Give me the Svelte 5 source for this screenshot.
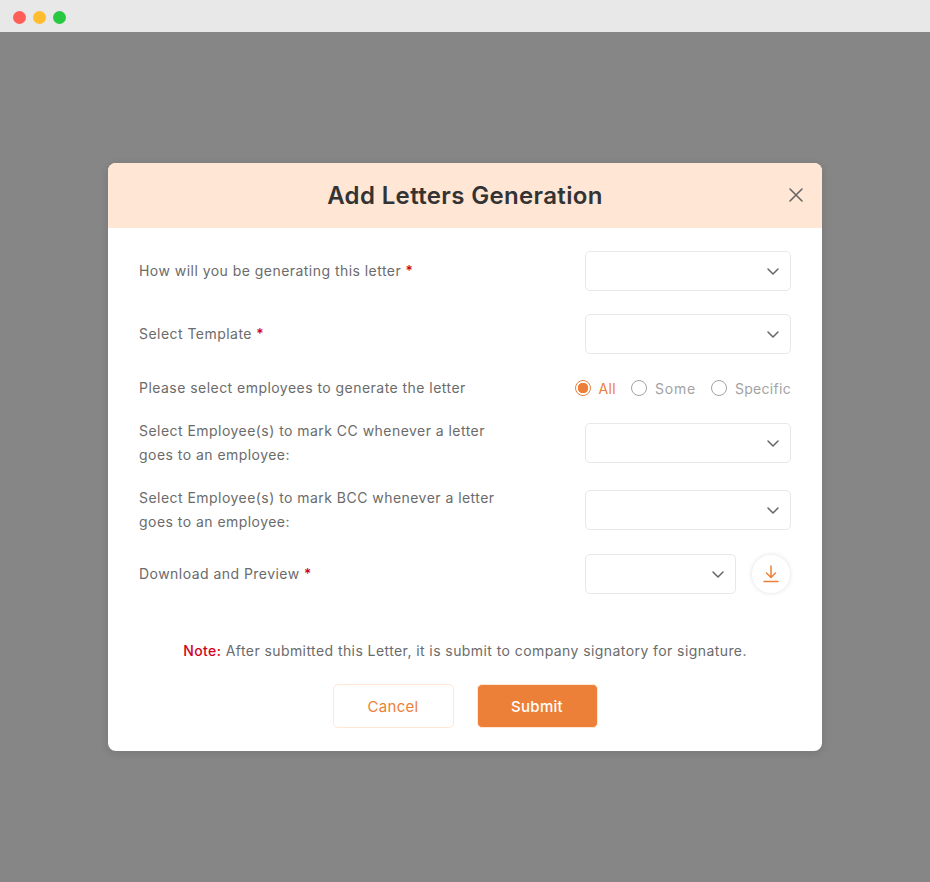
<script lang="ts">
	const radios = [
		{ label: 'All', active: true },
		{ label: 'Some', active: false },
		{ label: 'Specific', active: false }
	];
</script>

{#snippet select()}
	<button type="button" class="select" aria-label="Select">
		<svg width="12" height="7" viewBox="0 0 12 7" fill="none">
			<path d="M1 1l5 5 5-5" stroke="#666" stroke-width="1.5" stroke-linecap="round" stroke-linejoin="round" />
		</svg>
	</button>
{/snippet}

<div class="page">
	<header class="titlebar">
		<span class="dot red"></span>
		<span class="dot yellow"></span>
		<span class="dot green"></span>
	</header>

	<main class="overlay">
		<section class="modal">
			<div class="modal-head">
				<h1>Add Letters Generation</h1>
				<button type="button" class="close" aria-label="Close">
					<svg width="16" height="16" viewBox="0 0 16 16" fill="none">
						<path d="M2 2l12 12M14 2L2 14" stroke="#666" stroke-width="1.6" stroke-linecap="round" />
					</svg>
				</button>
			</div>

			<div class="modal-body">
				<div class="row first">
					<span class="label">How will you be generating this letter <b>*</b></span>
					{@render select()}
				</div>
				<div class="row first">
					<span class="label">Select Template <b>*</b></span>
					{@render select()}
				</div>
				<div class="row radios-row">
					<span class="label">Please select employees to generate the letter</span>
					<div class="radios">
						{#each radios as r}
							<span class="radio" class:active={r.active}>
								<i></i>{r.label}
							</span>
						{/each}
					</div>
				</div>
				<div class="row wrap">
					<span class="label narrow">Select Employee(s) to mark CC whenever a letter goes to an employee:</span>
					{@render select()}
				</div>
				<div class="row wrap">
					<span class="label narrow">Select Employee(s) to mark BCC whenever a letter goes to an employee:</span>
					{@render select()}
				</div>
				<div class="row last">
					<span class="label">Download and Preview <b>*</b></span>
					<div class="download-group">
						{@render select()}
						<button type="button" class="download" aria-label="Download">
							<svg width="16" height="18" viewBox="0 0 16 18" fill="none">
								<path d="M8 1v11M3.5 8L8 12.5 12.5 8M1 16.5h14" stroke="#ed8038" stroke-width="1.5" stroke-linecap="round" stroke-linejoin="round" />
							</svg>
						</button>
					</div>
				</div>

				<p class="note"><strong>Note:</strong> After submitted this Letter, it is submit to company signatory for signature.</p>

				<div class="actions">
					<button type="button" class="btn cancel">Cancel</button>
					<button type="button" class="btn submit">Submit</button>
				</div>
			</div>
		</section>
	</main>
</div>

<style>
	:global(body) {
		margin: 0;
		font-family: Inter, "Noto Sans", sans-serif;
	}

	.page {
		display: flex;
		flex-direction: column;
		height: 882px;
		background: #868686;
	}

	.titlebar {
		display: flex;
		align-items: center;
		gap: 7px;
		box-sizing: border-box;
		height: 32px;
		padding: 2px 14px 0 13px;
		background: #e8e8e8;
		flex: none;
	}

	.dot {
		width: 13px;
		height: 13px;
		border-radius: 50%;
	}
	.red { background: #ff5f57; }
	.yellow { background: #febc2e; }
	.green { background: #28c840; }

	.overlay {
		flex: 1;
		display: flex;
		align-items: center;
		justify-content: center;
	}

	.modal {
		width: 714px;
		background: #fff;
		border-radius: 8px;
		overflow: hidden;
		box-shadow: 0 2px 8px rgba(0, 0, 0, 0.12);
	}

	.modal-head {
		position: relative;
		height: 65px;
		display: flex;
		align-items: center;
		justify-content: center;
		background: #ffe6d5;
	}

	h1 {
		margin: 0;
		font-size: 24px;
		font-weight: 600;
		letter-spacing: 0.35px;
		color: #333;
	}

	.close {
		position: absolute;
		right: 18px;
		top: 24px;
		padding: 0;
		border: 0;
		background: none;
		display: flex;
	}

	.modal-body {
		padding: 23px 31px;
	}

	.row {
		display: flex;
		align-items: center;
		justify-content: space-between;
		margin-bottom: 19px;
	}
	.row.first { margin-bottom: 23px; }
	.row.radios-row { height: 22px; margin-bottom: 20px; }
	.row.wrap { height: 48px; }
	.row.last { height: 42px; margin-bottom: 0; }

	.label {
		font-size: 14px;
		line-height: 24px;
		letter-spacing: 0.46px;
		color: #6b6b6b;
	}
	.label b {
		color: #d0021b;
		font-weight: 500;
	}
	.narrow { width: 365px; }

	.select {
		display: flex;
		align-items: center;
		justify-content: flex-end;
		box-sizing: border-box;
		width: 206px;
		height: 40px;
		padding: 0 11px 0 0;
		border: 1px solid #e8e8e8;
		border-radius: 5px;
		background: #fff;
	}

	.download-group {
		display: flex;
		align-items: center;
		gap: 15px;
	}
	.download-group .select { width: 151px; }

	.download {
		box-sizing: border-box;
		width: 40px;
		height: 40px;
		display: flex;
		align-items: center;
		justify-content: center;
		padding: 0;
		border: 1px solid #f2f2f2;
		border-radius: 50%;
		background: #fff;
		box-shadow: 0 0 4px rgba(0, 0, 0, 0.08);
	}

	.radios {
		display: flex;
		gap: 15px;
	}

	.radio {
		display: flex;
		align-items: center;
		gap: 8px;
		font-size: 14px;
		letter-spacing: 0.3px;
		color: #a3a3a3;
	}
	.radio:nth-child(2) { letter-spacing: 0.8px; }
	.radio i {
		box-sizing: border-box;
		width: 16px;
		height: 16px;
		border: 1.5px solid #a3a3a3;
		border-radius: 50%;
	}
	.radio.active { color: #ed8038; }
	.radio.active i {
		border-color: #ed8038;
		background: radial-gradient(circle, #ed8038 0 5px, #fff 5.5px);
	}

	.note {
		margin: 44px 0 0;
		text-align: center;
		font-size: 14px;
		line-height: 24px;
		letter-spacing: 0.42px;
		color: #6b6b6b;
	}
	.note strong {
		color: #d0021b;
		font-weight: 500;
	}

	.actions {
		display: flex;
		justify-content: center;
		gap: 23px;
		margin-top: 21px;
	}

	.btn {
		width: 121px;
		height: 44px;
		border-radius: 5px;
		font: 500 15px Inter, "Noto Sans", sans-serif;
		letter-spacing: 0.3px;
	}
	.cancel {
		border: 1px solid #ffe6d5;
		background: #fff;
		color: #ed8038;
		font-weight: 400;
	}
	.submit {
		border: 1px solid #ffe6d5;
		background: #ed8038;
		color: #fff;
	}
</style>
